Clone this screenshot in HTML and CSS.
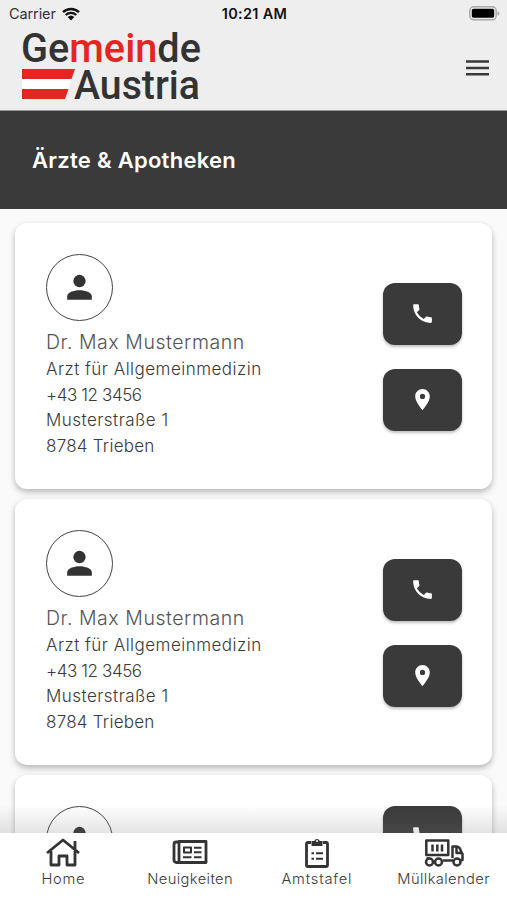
FILE: index.html
```html
<!DOCTYPE html>
<html lang="de">
<head>
<meta charset="utf-8">
<meta name="viewport" content="width=device-width, initial-scale=1">
<title>Ärzte &amp; Apotheken</title>
<link rel="stylesheet" href="styles.css">
</head>
<body>
<svg class="sprite" aria-hidden="true">
  <symbol id="person" viewBox="0 0 24 24"><circle cx="12" cy="7.8" r="4"/><path d="M4 20v-2.200c0-2.600 4.200-4 8-4s8 1.400 8 4V20z"/></symbol>
  <symbol id="phone" viewBox="0 0 24 24"><path d="M6.62 10.79a15.15 15.15 0 0 0 6.59 6.59l2.2-2.2c.27-.27.67-.36 1.02-.24 1.12.37 2.33.57 3.57.57.55 0 1 .45 1 1V20c0 .55-.45 1-1 1C10.61 21 3 13.39 3 4c0-.55.45-1 1-1h3.5c.55 0 1 .45 1 1 0 1.25.2 2.45.57 3.57.11.35.03.74-.25 1.02z"/></symbol>
  <symbol id="pin" viewBox="0 0 24 24"><path fill-rule="evenodd" d="M12 2c-3.87 0-7 3.13-7 7 0 5.25 7 13 7 13s7-7.75 7-13c0-3.87-3.13-7-7-7zm0 9.5a2.5 2.5 0 1 1 0-5 2.5 2.5 0 0 1 0 5z"/></symbol>
</svg>
<div class="app">
  <header class="top">
    <div class="status">
      <span class="carrier">Carrier
        <svg class="wifi" viewBox="0 0 18 14"><path d="M1 5.2a11.6 11.6 0 0 1 16 0M3.8 8a7.5 7.5 0 0 1 10.4 0" fill="none" stroke="#111" stroke-width="2.4"/><path d="M5.7 10.1a4.8 4.8 0 0 1 6.6 0L9 13.5z" fill="#111"/></svg>
      </span>
      <span class="time">10:21 AM</span>
      <svg class="battery" viewBox="0 0 31 15"><rect x=".8" y=".8" width="26.4" height="13" rx="4" fill="#eee" stroke="#aaa" stroke-width="1.5"/><rect x="2.8" y="2.8" width="22.4" height="9" rx="1.8" fill="#000"/><path d="M28.5 5v4.8q2-.8 2-2.4t-2-2.4z" fill="#aaa"/></svg>
    </div>
    <div class="bar">
      <svg class="logo" viewBox="0 0 184 74" role="img" aria-label="Gemeinde Austria">
        <text x="1" y="33.5" textLength="180" lengthAdjust="spacingAndGlyphs">Ge<tspan class="red">mein</tspan>de</text>
        <path class="red" d="M2 41h53l-3.500 10H2zM2 61h46.500L45 71H2z"/>
        <path fill="#fff" d="M2 51h49.500l-3 10H2z"/>
        <text x="54" y="71" textLength="126" lengthAdjust="spacingAndGlyphs">Austria</text>
      </svg>
      <svg class="menu" viewBox="0 0 23 16"><path d="M0 1.500h23M0 8h23M0 14.200h23" stroke="#3a3a3a" stroke-width="2.5"/></svg>
    </div>
  </header>
  <h1 class="title"><span>Ärzte &amp; Apotheken</span></h1>
  <main class="list">
    <article class="card">
      <div class="info">
        <div class="avatar"><svg><use href="#person"/></svg></div>
        <h2>Dr. Max Mustermann</h2>
        <p>Arzt für Allgemeinmedizin</p><p class="tel">+43 12 3456</p><p class="street">Musterstraße 1</p><p class="city">8784 Trieben</p>
      </div>
      <div class="actions"><a class="btn"><svg><use href="#phone"/></svg></a><a class="btn"><svg><use href="#pin"/></svg></a></div>
    </article>
    <article class="card">
      <div class="info">
        <div class="avatar"><svg><use href="#person"/></svg></div>
        <h2>Dr. Max Mustermann</h2>
        <p>Arzt für Allgemeinmedizin</p><p class="tel">+43 12 3456</p><p class="street">Musterstraße 1</p><p class="city">8784 Trieben</p>
      </div>
      <div class="actions"><a class="btn"><svg><use href="#phone"/></svg></a><a class="btn"><svg><use href="#pin"/></svg></a></div>
    </article>
    <article class="card peek">
      <div class="info">
        <div class="avatar"><svg><use href="#person"/></svg></div>
      </div>
      <div class="actions"><a class="btn"><svg><use href="#phone"/></svg></a></div>
    </article>
  </main>
  <nav class="tabs">
    <a class="tab"><svg viewBox="0 0 36 30"><path d="M2 15 18 2l16 13M30 11V3M6 13v14h8v-9h8v9h8V13"/></svg><span class="t-home">Home</span></a>
    <a class="tab"><svg viewBox="0 0 36 30"><path d="M7 3.500h27v21H4.500Q2 24.500 2 22V6.500Q2 4 4.500 4H7zM7 4v20"/><path class="thin" d="M12 9.500h7v5h-7zM22 9.700h7.500M22 14.200h7.500M11 19.200h8.500M22 19.200h7.500"/></svg><span class="t-news">Neuigkeiten</span></a>
    <a class="tab"><svg viewBox="0 0 36 30"><path d="M12 4.500H9Q7.500 4.500 7.500 6v21q0 1.500 1.500 1.500h18q1.500 0 1.500-1.500V6q0-1.500-1.500-1.500h-3"/><path class="solid" d="M12.500 8V3h2.700a3 3 0 0 1 5.600 0h2.700v5z"/><circle class="hole" cx="18" cy="3" r="1"/><path class="thin" d="M12.500 15.200h2.500M17 15.200h7M12.500 20.700h2.500M17 20.700h7"/></svg><span class="t-board">Amtstafel</span></a>
    <a class="tab"><svg class="truck" viewBox="0 0 40 30"><path d="M2.300 2.500h22v14.500h-22zM28.500 20V8.500h4q3.500 0 4.500 5l1.500 2.500v6h-2M32.500 9v6h5M19 22.500h10M2.500 20.500h3"/><path d="M8.500 6.500v7M13.300 6.500v7M18 6.500v7"/><g fill="#fff"><circle cx="5.500" cy="24" r="3.500"/><circle cx="14.500" cy="24" r="3.500"/><circle cx="33" cy="24" r="3.500"/></g></svg><span class="t-waste">Müllkalender</span></a>
  </nav>
</div>
</body>
</html>
```
FILE: styles.css
```css
* { box-sizing: border-box; margin: 0; padding: 0; }
body { font-family: Inter, "Open Sans", sans-serif; background: #fafafa; color: #3a3a3a; }
.sprite { display: none; }
.app { height: 900px; display: flex; flex-direction: column; overflow: hidden; }
.top { height: 111px; flex: none; background: #eee; border-bottom: 1px solid #999; }
.status { height: 27px; display: grid; grid-template-columns: 1fr auto 1fr; align-items: center; padding: 0 7px 0 9px; color: #111; }
.carrier { display: flex; align-items: center; gap: 6px; font-size: 14.5px; letter-spacing: -.1px; color: #333; }
.wifi { width: 18px; height: 14px; }
.time { font-size: 14.5px; font-weight: 600; letter-spacing: .3px; }
.battery { width: 31px; height: 15px; justify-self: end; }
.bar { display: flex; justify-content: space-between; align-items: flex-start; padding: 1px 18px 0 20px; }
.logo { width: 184px; height: 74px; overflow: visible; }
.logo text { font-family: Roboto, sans-serif; font-weight: 500; font-size: 41.5px; fill: #333; }
.logo .red { fill: #e52521; }
.menu { width: 23px; height: 16px; margin-top: 32px; }
.title { height: 98px; flex: none; background: #3a3a3a; color: #fff; padding-left: 32px; font-size: 22px; font-weight: 600; letter-spacing: .28px; line-height: 98px; white-space: nowrap; }
.list { flex: 1; min-height: 0; overflow: hidden; padding: 14px 15px 0; display: flex; flex-direction: column; gap: 10px; position: relative; }
.list::after { content: ""; position: absolute; left: 0; right: 0; bottom: 0; height: 28px; background: linear-gradient(rgba(120,120,120,0), rgba(120,120,120,.2)); }
.card { flex: none; height: 266px; border-radius: 12px; background: #fff; padding: 31px 30px 0 31px; display: flex; justify-content: space-between; box-shadow: 0 3px 6px rgba(0,0,0,.27); }
.avatar { width: 67px; height: 67px; border: 1.3px solid #444; border-radius: 50%; display: grid; place-items: center; margin-bottom: 6px; }
.avatar svg { width: 37px; height: 37px; fill: #333; }
h2 { font-size: 19.5px; font-weight: 300; letter-spacing: .55px; line-height: 31px; height: 30px; color: #555; white-space: nowrap; }
p { font-size: 17px; font-weight: 300; letter-spacing: .48px; line-height: 25.7px; white-space: nowrap; }
.tel { letter-spacing: -.4px; }
.city { letter-spacing: .25px; }
.actions { display: flex; flex-direction: column; gap: 24.5px; padding-top: 29px; }
.peek .actions { padding-top: 0; }
.btn { width: 79px; height: 61.5px; border-radius: 12px; background: #3a3a3a; display: grid; place-items: center; box-shadow: 0 2px 3px rgba(0,0,0,.25); }
.btn svg { width: 25px; height: 25px; fill: #fff; }
.tabs { height: 67px; flex: none; background: #fff; display: grid; grid-template-columns: repeat(4, 1fr); }
.tab { display: flex; flex-direction: column; align-items: center; padding-top: 5px; font-size: 14.7px; font-weight: 300; line-height: 20px; gap: 1px; }
.tab svg { width: 36px; height: 30px; overflow: visible; fill: none; stroke: #333; stroke-width: 2.8; stroke-linejoin: round; }
.tab .truck { width: 40px; stroke-width: 2.5; }
.tab .thin { stroke-width: 2; }
.tab .solid { fill: #333; stroke: none; }
.tab .hole { fill: #fff; stroke: none; }
.t-home { letter-spacing: .7px; }
.t-news { letter-spacing: .4px; }
.t-board { letter-spacing: .8px; }
.t-waste { letter-spacing: .4px; }
```
